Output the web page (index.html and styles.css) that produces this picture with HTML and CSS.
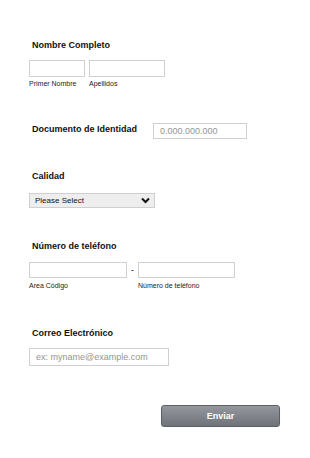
FILE: index.html
```html
<!DOCTYPE html>
<html lang="es">
<head>
    <meta charset="UTF-8">
    <meta name="viewport" content="width=device-width, initial-scale=1.0">
    <title>Formulario</title>
    <link rel="stylesheet" href="styles.css">
</head>
<body>
    <form class="form">

        <div class="form-line line-name">
            <label class="form-label">Nombre Completo</label>
            <div class="field-row">
                <div class="sub-field">
                    <input type="text" class="input input-first">
                    <span class="sub-label">Primer Nombre</span>
                </div>
                <div class="sub-field">
                    <input type="text" class="input input-last">
                    <span class="sub-label">Apellidos</span>
                </div>
            </div>
        </div>

        <div class="form-line line-id">
            <label class="form-label label-left">Documento de Identidad</label>
            <input type="text" class="input input-id" placeholder="0.000.000.000">
        </div>

        <div class="form-line line-quality">
            <label class="form-label">Calidad</label>
            <div class="select-wrap">
                <select class="select">
                    <option>Please Select</option>
                </select>
                <svg class="chevron" width="9" height="7" viewBox="0 0 9 7">
                    <path d="M1 1.5 L4.5 5 L8 1.5" fill="none" stroke="#111" stroke-width="2"/>
                </svg>
            </div>
        </div>

        <div class="form-line line-phone">
            <label class="form-label">Número de teléfono</label>
            <div class="field-row">
                <div class="sub-field">
                    <input type="tel" class="input input-area">
                    <span class="sub-label">Area Código</span>
                </div>
                <span class="dash">-</span>
                <div class="sub-field">
                    <input type="tel" class="input input-phone">
                    <span class="sub-label">Número de teléfono</span>
                </div>
            </div>
        </div>

        <div class="form-line line-email">
            <label class="form-label">Correo Electrónico</label>
            <input type="email" class="input input-email" placeholder="ex: myname@example.com">
        </div>

        <div class="buttons-container">
            <button type="button" class="submit">Enviar</button>
        </div>

    </form>
</body>
</html>
```

FILE: styles.css
```css
body {
    margin: 0;
    padding: 0;
    background-color: #fff;
    font-family: 'Liberation Sans', Arial, sans-serif;
    color: #111;
}

.form {
    padding: 40px 0 0 29px;
}

.form-label {
    display: block;
    padding-left: 3px;
    font-size: 9px;
    line-height: 11px;
    font-weight: bold;
}

.field-row {
    display: flex;
    align-items: flex-start;
    margin-top: 9px;
}

.sub-field {
    display: flex;
    flex-direction: column;
}

.sub-label {
    margin-top: 3px;
    font-size: 7px;
    line-height: 8px;
    color: #222;
}

.input {
    box-sizing: border-box;
    margin: 0;
    padding: 0 6px;
    border: 1px solid #d0d0d0;
    background-color: #fff;
    font-family: inherit;
    font-size: 9px;
    outline: none;
}

.input::placeholder {
    color: #949494;
}

.input-first {
    width: 56px;
    height: 17px;
    margin-right: 4px;
}

.input-last {
    width: 76px;
    height: 17px;
}

/* documento */
.line-id {
    display: flex;
    align-items: flex-start;
    margin-top: 35px;
}

.label-left {
    width: 121px;
    margin-top: 1px;
}

.input-id {
    width: 94px;
    height: 16px;
}

/* calidad */
.line-quality {
    margin-top: 32px;
}

.select-wrap {
    position: relative;
    width: 126px;
    margin-top: 11px;
}

.select {
    appearance: none;
    -webkit-appearance: none;
    display: block;
    box-sizing: border-box;
    width: 126px;
    height: 15px;
    margin: 0;
    padding: 0 5px;
    border: 1px solid #cfcfcf;
    background-color: #eeeeee;
    font-family: inherit;
    font-size: 8px;
    color: #111;
}

.chevron {
    position: absolute;
    top: 4px;
    right: 5px;
}

/* telefono */
.line-phone {
    margin-top: 33px;
}

.line-phone .field-row {
    margin-top: 10px;
}

.line-phone .sub-label {
    margin-top: 4px;
}

.input-area {
    width: 98px;
    height: 16px;
}

.dash {
    width: 11px;
    font-size: 9px;
    line-height: 16px;
    text-align: center;
}

.input-phone {
    width: 97px;
    height: 16px;
}

/* correo */
.line-email {
    margin-top: 38px;
}

.input-email {
    width: 140px;
    height: 18px;
    margin-top: 9px;
}

.buttons-container {
    margin-top: 39px;
    padding-left: 132px;
}

.submit {
    width: 119px;
    height: 22px;
    border: 1px solid #5c5f66;
    border-radius: 3px;
    background: linear-gradient(#94979d, #6f7279);
    box-shadow: 0 1px 1px rgba(0, 0, 0, 0.15);
    color: #fff;
    font-family: inherit;
    font-size: 9px;
    font-weight: bold;
    cursor: pointer;
}
```
